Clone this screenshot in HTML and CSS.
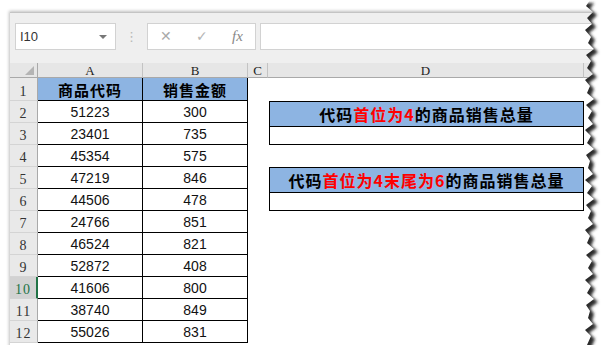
FILE: index.html
```html
<!DOCTYPE html>
<html lang="zh">
<head>
  <meta charset="UTF-8" />
  <title>商品销售总量</title>
  <link rel="stylesheet" href="styles.css">
</head>
<body>
  <div class="frame">
    <div class="toolbar">
      <div class="namebox"><span>I10</span><span class="caret"></span></div>
      <div class="dots">⋮</div>
      <div class="fxbox">
        <span class="cancel">✕</span>
        <span class="ok">✓</span>
        <span class="fx">fx</span>
      </div>
      <div class="formula"></div>
    </div>

    <div class="sheet">
      <div class="corner"></div>
      <div class="colhead">A</div>
      <div class="colhead">B</div>
      <div class="colhead">C</div>
      <div class="colhead">D</div>
      <div class="colhead last"></div>

      <div class="rowhead r1">1</div>
      <div class="cell head first">商品代码</div>
      <div class="cell head">销售金额</div>

      <div class="rowhead">2</div><div class="cell first">51223</div><div class="cell">300</div>
      <div class="rowhead">3</div><div class="cell first">23401</div><div class="cell">735</div>
      <div class="rowhead">4</div><div class="cell first">45354</div><div class="cell">575</div>
      <div class="rowhead">5</div><div class="cell first">47219</div><div class="cell">846</div>
      <div class="rowhead">6</div><div class="cell first">44506</div><div class="cell">478</div>
      <div class="rowhead">7</div><div class="cell first">24766</div><div class="cell">851</div>
      <div class="rowhead">8</div><div class="cell first">46524</div><div class="cell">821</div>
      <div class="rowhead">9</div><div class="cell first">52872</div><div class="cell">408</div>
      <div class="rowhead sel">10</div><div class="cell first">41606</div><div class="cell">800</div>
      <div class="rowhead">11</div><div class="cell first">38740</div><div class="cell">849</div>
      <div class="rowhead">12</div><div class="cell first">55026</div><div class="cell">831</div>

      <div class="box box-one">
        <div class="box-title">代码<span class="red">首位为4</span>的商品销售总量</div>
        <div class="box-value"></div>
      </div>
      <div class="box box-two">
        <div class="box-title">代码<span class="red">首位为4末尾为6</span>的商品销售总量</div>
        <div class="box-value"></div>
      </div>
    </div>

    <svg class="torn" width="38" height="345" viewBox="0 0 38 345">
      <defs>
        <filter id="soft" x="-50%" y="-10%" width="200%" height="120%">
          <feGaussianBlur stdDeviation="1.6" />
        </filter>
        <clipPath id="outside">
          <path d="M38,0 L12,0 8,6 15,12 9,18 14,24 7,30 13,37 10,43 16,49 8,55 13,61 9,68 15,74 7,80 12,86 9,93 16,99 8,105 14,111 10,118 15,124 7,130 13,136 9,143 16,149 8,155 12,161 10,168 15,174 7,180 14,186 9,193 16,199 8,205 13,211 10,218 15,224 7,230 12,236 9,243 16,249 8,255 14,261 10,268 15,274 7,280 13,286 9,293 16,299 8,305 12,311 10,318 15,324 7,330 13,336 9,345 L38,345 Z" />
        </clipPath>
      </defs>
      <path fill="#fff"
        d="M38,0 L12,0 8,6 15,12 9,18 14,24 7,30 13,37 10,43 16,49 8,55 13,61 9,68 15,74 7,80 12,86 9,93 16,99 8,105 14,111 10,118 15,124 7,130 13,136 9,143 16,149 8,155 12,161 10,168 15,174 7,180 14,186 9,193 16,199 8,205 13,211 10,218 15,224 7,230 12,236 9,243 16,249 8,255 14,261 10,268 15,274 7,280 13,286 9,293 16,299 8,305 12,311 10,318 15,324 7,330 13,336 9,345 L38,345 Z" />
      <g clip-path="url(#outside)">
        <path fill="#2a2a2a" filter="url(#soft)" transform="translate(4 3)"
          d="M-40,0 L12,0 8,6 15,12 9,18 14,24 7,30 13,37 10,43 16,49 8,55 13,61 9,68 15,74 7,80 12,86 9,93 16,99 8,105 14,111 10,118 15,124 7,130 13,136 9,143 16,149 8,155 12,161 10,168 15,174 7,180 14,186 9,193 16,199 8,205 13,211 10,218 15,224 7,230 12,236 9,243 16,249 8,255 14,261 10,268 15,274 7,280 13,286 9,293 16,299 8,305 12,311 10,318 15,324 7,330 13,336 9,345 L-40,345 Z" />
      </g>
    </svg>
  </div>
</body>
</html>
```

FILE: styles.css
```css
body {
  margin: 0;
  background: #fff;
  overflow: hidden;
  font-family: "Liberation Sans", Arial, sans-serif;
}

.frame {
  margin: 12px 0 0 10px;
  width: 590px;
  height: 340px;
  border-top: 1px solid #c4c4c4;
  box-shadow: -1px -1px 3px rgba(0, 0, 0, 0.25);
}

/* formula bar */
.toolbar {
  height: 50px;
  box-sizing: border-box;
  padding: 10px 0 0 5px;
  display: flex;
  align-items: flex-start;
  background: #efefef;
}

.namebox {
  width: 101px;
  height: 27px;
  box-sizing: border-box;
  background: #fff;
  border: 1px solid #d2d2d2;
  display: flex;
  align-items: center;
  justify-content: space-between;
  padding: 0 8px 0 4px;
  font-size: 13px;
  color: #333;
}

.caret {
  width: 0;
  height: 0;
  border-left: 4px solid transparent;
  border-right: 4px solid transparent;
  border-top: 4px solid #777;
}

.dots {
  width: 31px;
  line-height: 27px;
  text-align: center;
  color: #b8b8b8;
  font-family: "DejaVu Sans", sans-serif;
  font-size: 13px;
}

.fxbox {
  width: 109px;
  height: 27px;
  box-sizing: border-box;
  background: #fff;
  border: 1px solid #d2d2d2;
  position: relative;
  color: #aaa;
  font-family: "DejaVu Sans", sans-serif;
  font-size: 14px;
  line-height: 25px;
}

.fxbox span {
  position: absolute;
  top: 0;
}

.cancel { left: 12px; }
.ok { left: 48px; color: #b5b5b5; }

.fx {
  left: 84px;
  font-family: "Liberation Serif", serif;
  font-style: italic;
  font-size: 15px;
  color: #888;
}

.formula {
  flex: 1;
  height: 27px;
  margin-left: 4px;
  box-sizing: border-box;
  background: #fff;
  border: 1px solid #d2d2d2;
}

/* grid */
.sheet {
  display: grid;
  grid-template-columns: 28px 105px 105px 20px 316px 16px;
  grid-template-rows: 15px 23px repeat(11, 22px);
  background: #fff;
}

.corner,
.colhead {
  background: #e6e6e6;
  border-right: 1px solid #c3c3c3;
  border-bottom: 1px solid #a9a9a9;
  box-sizing: border-box;
  display: flex;
  align-items: flex-end;
  justify-content: center;
  font-family: "Liberation Serif", serif;
  font-size: 13px;
  line-height: 13px;
  color: #222;
}

.corner {
  position: relative;
  border-right-color: #a9a9a9;
}

.corner::after {
  content: "";
  position: absolute;
  right: 3px;
  bottom: 2px;
  border-left: 9px solid transparent;
  border-bottom: 9px solid #b4b4b4;
}

.colhead.last {
  border-right: none;
}

.rowhead {
  grid-column: 1;
  background: #e9e9e9;
  border-bottom: 1px solid #d4d4d4;
  border-right: 1px solid #a9a9a9;
  box-sizing: border-box;
  display: flex;
  align-items: flex-end;
  justify-content: center;
  padding-bottom: 1px;
  font-family: "Liberation Serif", serif;
  font-size: 14px;
  letter-spacing: 1px;
  line-height: 15px;
  color: #333;
}

.rowhead.sel {
  background: #d2d2d2;
  color: #217346;
  border-right: 2px solid #217346;
}

.cell {
  border-right: 1px solid #000;
  border-bottom: 1px solid #000;
  box-sizing: border-box;
  display: flex;
  align-items: center;
  justify-content: center;
  font-size: 14px;
  color: #111;
}

.cell.first {
  grid-column: 2;
}

.cell.head {
  background: #8db4e2;
  font-family: "Noto Sans CJK SC", sans-serif;
  font-weight: bold;
  font-size: 15px;
  letter-spacing: 1px;
  color: #000;
}

/* summary boxes in column D */
.box {
  grid-column: 5;
  margin-left: 1px;
  border: 1px solid #000;
  display: flex;
  flex-direction: column;
}

.box-one { grid-row: 3 / span 2; }
.box-two { grid-row: 6 / span 2; }

.box-title {
  flex: 1;
  background: #8db4e2;
  border-bottom: 1px solid #000;
  display: flex;
  align-items: center;
  justify-content: center;
  font-family: "Noto Sans CJK SC", sans-serif;
  font-weight: bold;
  font-size: 16px;
  letter-spacing: 1px;
  color: #000;
}

.box-value {
  flex: 1;
  background: #fff;
}

.red {
  color: #ff0000;
}

.torn {
  position: absolute;
  left: 578px;
  top: 0;
}
```
